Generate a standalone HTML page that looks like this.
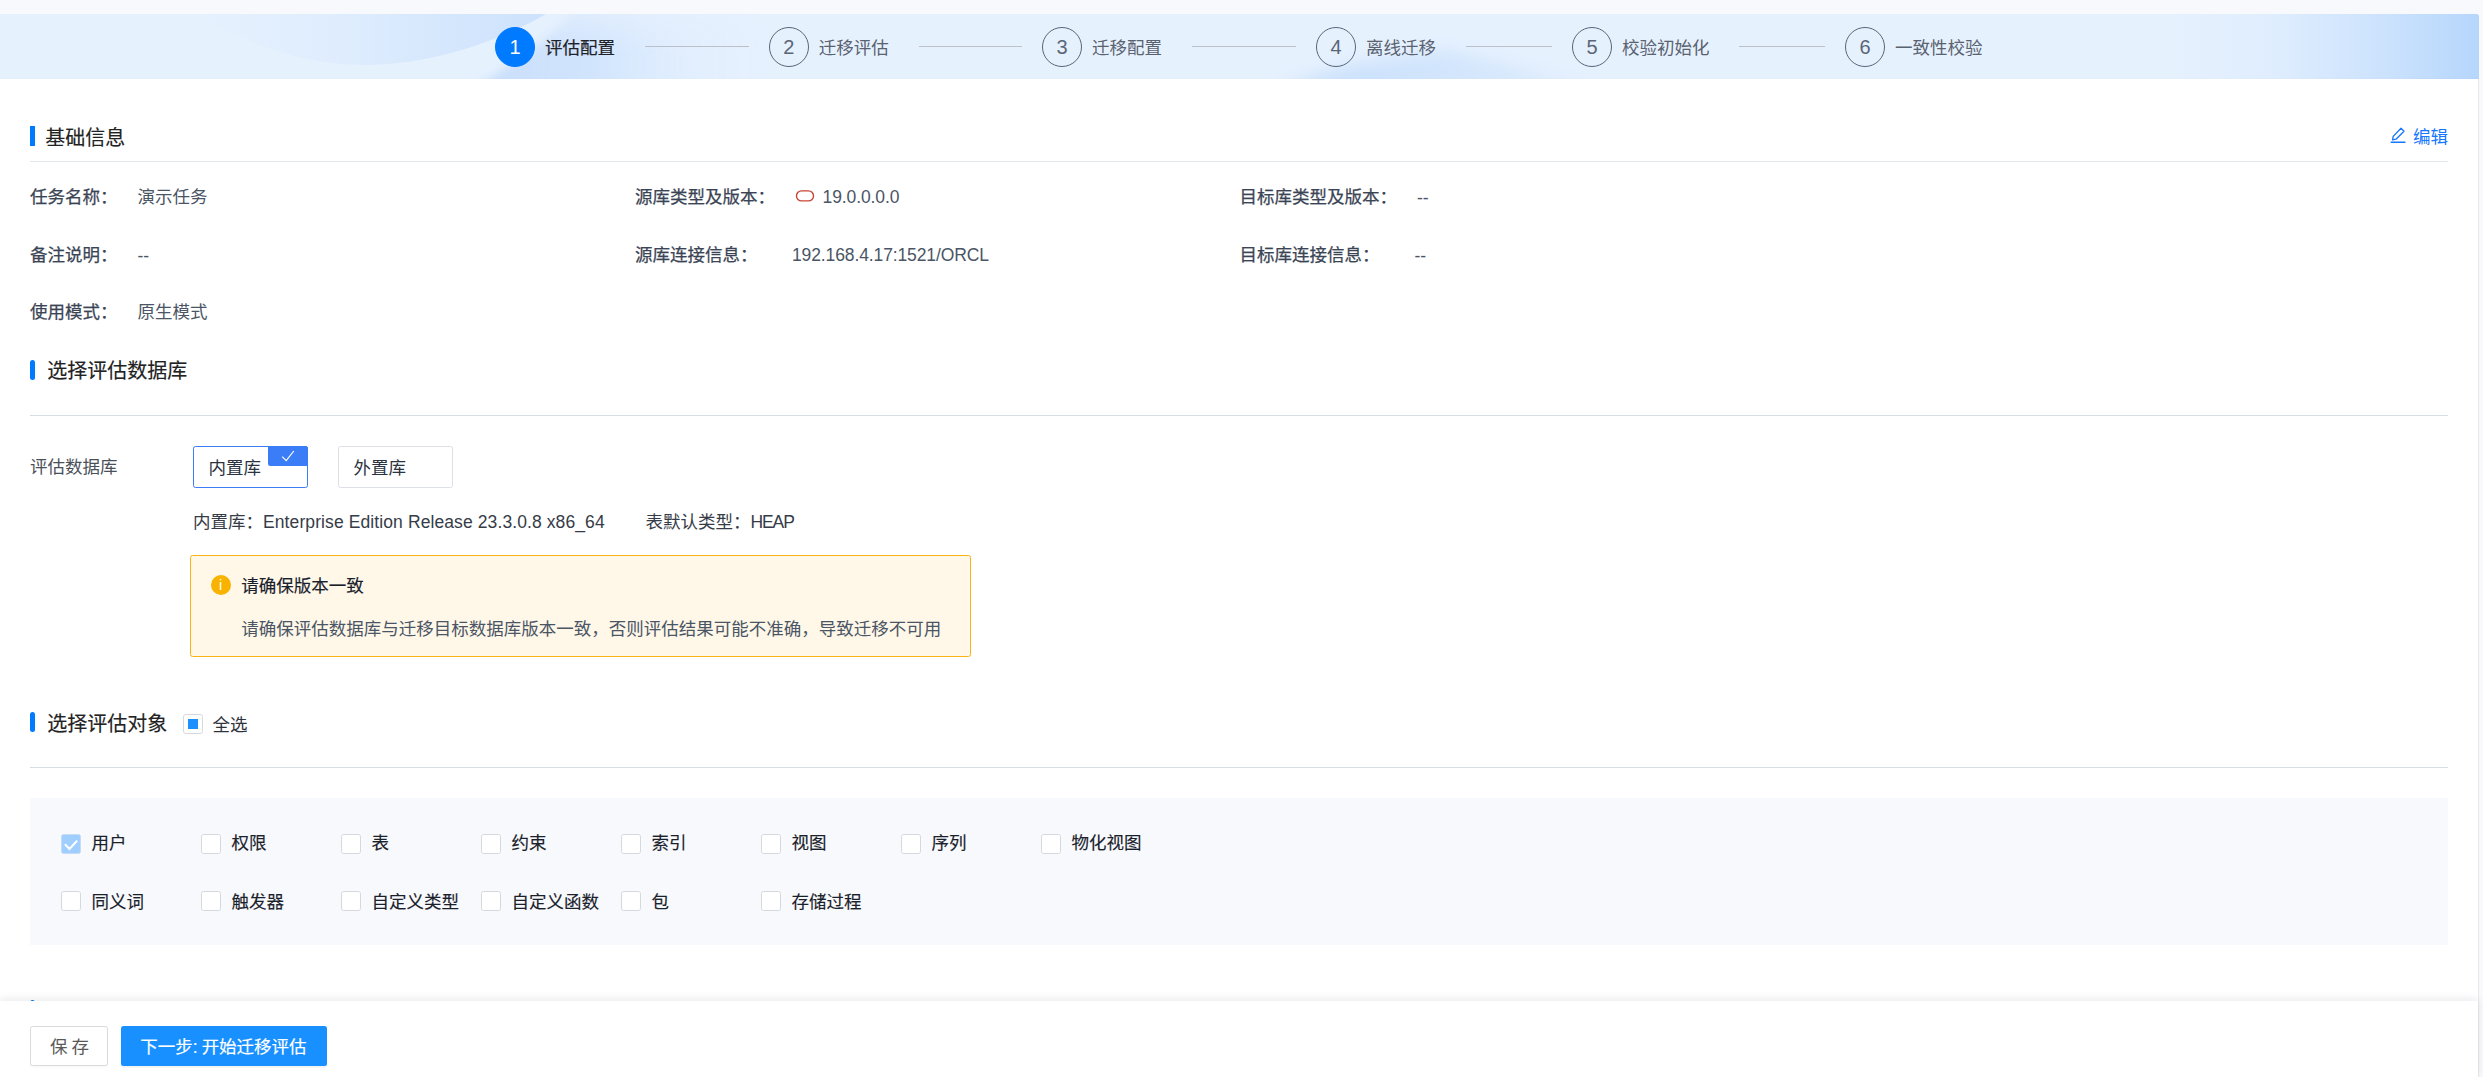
<!DOCTYPE html>
<html lang="zh-CN">
<head>
<meta charset="utf-8">
<title>评估配置</title>
<style>
*{box-sizing:border-box;margin:0;padding:0}
html,body{width:2483px;height:1077px;overflow:hidden}
body{background:#f7f9fc;font-family:"Liberation Sans","Noto Sans CJK SC",sans-serif;font-size:17.5px;color:#1f2329;position:relative}
.abs{position:absolute}
.t{position:absolute;white-space:nowrap;line-height:26px;height:26px;margin-top:1px}
#banner{position:absolute;left:0;top:14px;width:2479px;height:65.3px;background:#e6f1fe;border-top-right-radius:3px;overflow:hidden}
#card{position:absolute;left:0;top:79.3px;width:2478px;height:998px;background:#fff;box-shadow:1px 0 1px rgba(0,0,0,.06)}
.num{position:absolute;top:27px;width:40px;height:40px;border-radius:50%;border:1.25px solid #5a6678;color:#5a6678;font-size:20px;line-height:38.6px;text-align:center}
.num.on{background:#007aff;border-color:#007aff;color:#fff}
.stitle{font-size:17.5px;color:#5a6270;font-weight:400;top:34px}
.stitle.on{color:#1f2329;font-weight:400;-webkit-text-stroke:0.2px #1f2329}
.sline{position:absolute;top:46px;height:1px;background:#bcc0c8}
.h{font-size:20px;font-weight:400;color:#222;-webkit-text-stroke:0.15px #222;margin-top:1.2px;margin-left:-0.7px}
.bar{position:absolute;left:30px;width:5px;height:20px;background:#007aff}
.bar.r{border-radius:2.5px}
.hr{position:absolute;left:30px;width:2418px;height:1px;background:#e3e8f0}
.lb{font-weight:400;color:#3a4454;-webkit-text-stroke:0.25px #3a4454}
.val{color:#4a5565}
.cb{position:absolute;width:20px;height:20px;border:1px solid #d5d8dd;border-radius:2.5px;background:#fff}
.cl{color:#1a212b;-webkit-text-stroke:0.14px #1a212b;margin-top:1.4px}
</style>
</head>
<body>
<div id="banner"><svg width="2479" height="66" viewBox="0 0 2479 66" style="position:absolute;left:0;top:0">
<defs>
<linearGradient id="gA" gradientUnits="userSpaceOnUse" x1="200" y1="0" x2="546" y2="0"><stop offset="0" stop-color="#cde2fc" stop-opacity="0"/><stop offset="0.45" stop-color="#cde2fc" stop-opacity="0.35"/><stop offset="1" stop-color="#cde2fc" stop-opacity="1"/></linearGradient>
<linearGradient id="gB" gradientUnits="userSpaceOnUse" x1="500" y1="0" x2="770" y2="0"><stop offset="0" stop-color="#cadffc" stop-opacity="1"/><stop offset="0.35" stop-color="#cfe3fd" stop-opacity="0.9"/><stop offset="1" stop-color="#e6f1fe" stop-opacity="0"/></linearGradient>
<linearGradient id="gR" gradientUnits="userSpaceOnUse" x1="2170" y1="0" x2="2479" y2="0"><stop offset="0" stop-color="#b6d6fc" stop-opacity="0"/><stop offset="0.35" stop-color="#b6d6fc" stop-opacity="0.16"/><stop offset="0.7" stop-color="#b6d6fc" stop-opacity="0.55"/><stop offset="1" stop-color="#b6d6fc" stop-opacity="1"/></linearGradient>
<linearGradient id="gM" x1="0" y1="0" x2="0" y2="1"><stop offset="0" stop-color="#fff" stop-opacity="0.35"/><stop offset="0.6" stop-color="#fff" stop-opacity="1"/></linearGradient><mask id="mB" maskUnits="userSpaceOnUse" x="400" y="0" width="450" height="66"><rect x="400" y="0" width="450" height="66" fill="url(#gM)"/></mask>
<linearGradient id="gC" gradientUnits="userSpaceOnUse" x1="1290" y1="0" x2="1600" y2="0"><stop offset="0" stop-color="#c4dcfc" stop-opacity="1"/><stop offset="0.4" stop-color="#c9e0fc" stop-opacity="0.8"/><stop offset="1" stop-color="#d4e6fd" stop-opacity="0.5"/></linearGradient>
<filter id="b4" x="-10%" y="-50%" width="120%" height="200%"><feGaussianBlur stdDeviation="4"/></filter>
<filter id="b9" x="-20%" y="-100%" width="140%" height="300%"><feGaussianBlur stdDeviation="9"/></filter>
</defs>
<rect width="2479" height="66" fill="#e6f1fe"/>
<g mask="url(#mB)"><path d="M476 72 C512 52 548 26 578 -8 L800 -8 L800 72 Z" fill="url(#gB)" filter="url(#b4)"/></g>
<path d="M190 0 C250 30 300 51 366 51 C430 51 500 27 546 0 Z" fill="url(#gA)"/>
<path d="M1275 76 L1350 52 L1445 36 L1500 48 L1600 76 Z" fill="url(#gC)" filter="url(#b9)"/>
<rect x="2170" width="309" height="66" fill="url(#gR)"/>
</svg></div>
<div id="card"></div>
<div id="steps">
<div class="num on" style="left:495px">1</div><div class="t stitle on" style="left:545px">评估配置</div><div class="sline" style="left:645px;width:104px"></div>
<div class="num" style="left:768.75px">2</div><div class="t stitle" style="left:818.75px">迁移评估</div><div class="sline" style="left:919px;width:103px"></div>
<div class="num" style="left:1042.1px">3</div><div class="t stitle" style="left:1092.1px">迁移配置</div><div class="sline" style="left:1192px;width:104px"></div>
<div class="num" style="left:1316px">4</div><div class="t stitle" style="left:1366px">离线迁移</div><div class="sline" style="left:1466px;width:86px"></div>
<div class="num" style="left:1572px">5</div><div class="t stitle" style="left:1622px">校验初始化</div><div class="sline" style="left:1739px;width:86px"></div>
<div class="num" style="left:1845px">6</div><div class="t stitle" style="left:1895px">一致性校验</div>
</div>
<div id="content">
<div class="bar" style="top:126px"></div>
<div class="t h" style="left:46px;top:123.4px;">基础信息</div>
<svg class="abs" style="left:2390px;top:126px" width="17" height="18" viewBox="0 0 17 18" fill="none" stroke="#1677ff" stroke-width="1.35" stroke-linejoin="round" stroke-linecap="round"><path d="M11 2.2 L14 5.2 L6 13.2 L2.6 13.8 L3.2 10.4 Z"/><path d="M1.2 16.2 H15"/></svg>
<div class="t lnk" style="left:2413px;top:123.30000000000001px;color:#1677ff">编辑</div>
<div class="hr" style="top:161px"></div>
<div class="t lb" style="left:30px;top:183.4px;">任务名称：</div>
<div class="t val" style="left:137.5px;top:183.4px;">演示任务</div>
<div class="t lb" style="left:30px;top:241px;">备注说明：</div>
<div class="t val" style="left:137.5px;top:241.5px;">--</div>
<div class="t lb" style="left:30px;top:298px;">使用模式：</div>
<div class="t val" style="left:137.5px;top:298px;">原生模式</div>
<div class="t lb" style="left:635px;top:183.4px;">源库类型及版本：</div>
<svg class="abs" style="left:795px;top:190px" width="20" height="12" viewBox="0 0 20 12" fill="none" stroke="#c74634" stroke-width="1.4"><rect x="1.5" y="0.9" width="17" height="10" rx="5"/></svg>
<div class="t val" style="left:822.5px;top:183.4px;"><span style="letter-spacing:-0.1px">19.0.0.0.0</span></div>
<div class="t lb" style="left:635px;top:241px;">源库连接信息：</div>
<div class="t val" style="left:792px;top:241px;"><span style="letter-spacing:-0.12px">192.168.4.17:1521/ORCL</span></div>
<div class="t lb" style="left:1239.4px;top:183.4px;">目标库类型及版本：</div>
<div class="t val" style="left:1417px;top:183.9px;">--</div>
<div class="t lb" style="left:1239.4px;top:241px;">目标库连接信息：</div>
<div class="t val" style="left:1414.5px;top:241.5px;">--</div>
<div class="bar r" style="top:360px"></div>
<div class="t h" style="left:48px;top:357.2px;">选择评估数据库</div>
<div class="hr" style="top:415px;background:#d9dde6"></div>
<div class="t val" style="left:30px;top:453px;color:#4b5058">评估数据库</div>
<div class="abs" style="left:193px;top:446px;width:115px;height:42px;border:1px solid #3b7cf7;border-radius:2.5px;background:#fff"></div>
<div class="abs" style="left:268px;top:446px;width:40px;height:20px;background:#3b7cf7;border-radius:0 2.5px 0 2.5px"></div>
<svg class="abs" style="left:281px;top:449.8px" width="14" height="12" viewBox="0 0 14 12" fill="none" stroke="#fff" stroke-width="1.2"><path d="M1.2 6.6 L5.2 10.6 L12.8 1"/></svg>
<div class="t opt" style="left:208.5px;top:454px;color:#2b3340">内置库</div>
<div class="abs" style="left:338px;top:446px;width:115px;height:42px;border:1px solid #dcdfe6;border-radius:2.5px;background:#fff"></div>
<div class="t opt" style="left:353.5px;top:454px;color:#2b3340">外置库</div>
<div class="t val" style="left:193px;top:508.3px;color:#363c47">内置库：<span class="en" style="letter-spacing:0.1px">Enterprise Edition Release 23.3.0.8 x86_64</span></div>
<div class="t val" style="left:645.5px;top:508.3px;color:#363c47">表默认类型：<span class="en" style="letter-spacing:-1.1px">HEAP</span></div>
<div class="abs" style="left:190px;top:555px;width:781px;height:102px;border:1px solid #f8b414;border-radius:2.5px;background:#fff7e8"></div>
<div class="abs" style="left:210.5px;top:575px;width:20px;height:20px;border-radius:50%;background:#f8b300;color:#fff;font-size:14.5px;line-height:20.5px;text-align:center;font-weight:400">i</div>
<div class="t at" style="left:241.3px;top:572px;color:#17202c;-webkit-text-stroke:0.14px #17202c">请确保版本一致</div>
<div class="t ad" style="left:241.3px;top:614.5px;color:#4a5565">请确保评估数据库与迁移目标数据库版本一致，否则评估结果可能不准确，导致迁移不可用</div>
<div class="bar r" style="top:712px"></div>
<div class="t h" style="left:48px;top:709.4px;">选择评估对象</div>
<div class="cb" style="left:183px;top:714px"><div style="position:absolute;left:3.8px;top:3.8px;width:10.2px;height:10.2px;background:#1e8fff"></div></div>
<div class="t val" style="left:212.6px;top:711px;color:#2f343c">全选</div>
<div class="hr" style="top:767px;background:#d9dde6"></div>
<div class="abs" style="left:30px;top:798px;width:2418px;height:146.5px;background:#f7f9fc"></div>
<div class="cb" style="left:61px;top:834px;background:#a0cfff;border-color:#c6dcf5"><svg style="position:absolute;left:-1px;top:-1px" width="20" height="20" viewBox="0 0 20 20" fill="none" stroke="#fff" stroke-width="2.1"><path d="M3.9 10.3 L8.5 15 L16.2 6.6"/></svg></div>
<div class="t cl" style="left:91.5px;top:829.1px;">用户</div>
<div class="cb" style="left:201px;top:834px"></div>
<div class="t cl" style="left:231.5px;top:829.1px;">权限</div>
<div class="cb" style="left:341px;top:834px"></div>
<div class="t cl" style="left:371.5px;top:829.1px;">表</div>
<div class="cb" style="left:481px;top:834px"></div>
<div class="t cl" style="left:511.5px;top:829.1px;">约束</div>
<div class="cb" style="left:621px;top:834px"></div>
<div class="t cl" style="left:651.5px;top:829.1px;">索引</div>
<div class="cb" style="left:761px;top:834px"></div>
<div class="t cl" style="left:791.5px;top:829.1px;">视图</div>
<div class="cb" style="left:901px;top:834px"></div>
<div class="t cl" style="left:931.5px;top:829.1px;">序列</div>
<div class="cb" style="left:1041px;top:834px"></div>
<div class="t cl" style="left:1071.5px;top:829.1px;">物化视图</div>
<div class="cb" style="left:61px;top:891px"></div>
<div class="t cl" style="left:91.5px;top:887.3px;">同义词</div>
<div class="cb" style="left:201px;top:891px"></div>
<div class="t cl" style="left:231.5px;top:887.3px;">触发器</div>
<div class="cb" style="left:341px;top:891px"></div>
<div class="t cl" style="left:371.5px;top:887.3px;">自定义类型</div>
<div class="cb" style="left:481px;top:891px"></div>
<div class="t cl" style="left:511.5px;top:887.3px;">自定义函数</div>
<div class="cb" style="left:621px;top:891px"></div>
<div class="t cl" style="left:651.5px;top:887.3px;">包</div>
<div class="cb" style="left:761px;top:891px"></div>
<div class="t cl" style="left:791.5px;top:887.3px;">存储过程</div>
<div class="bar r" style="top:999.7px"></div>
</div>
<div id="footer">
<div class="abs" style="left:0;top:1000.5px;width:2478px;height:77px;background:#fff;box-shadow:0 -2px 8px rgba(0,21,41,.085)"></div>
<div class="abs" style="left:30px;top:1026px;width:78px;height:40px;border:1px solid #d9d9d9;border-radius:2.5px;background:#fff;box-shadow:0 2px 0 rgba(0,0,0,.016)"></div>
<div class="t bt" style="left:50px;top:1033px;color:#595959">保<span style="letter-spacing:-0.9px"> </span>存</div>
<div class="abs" style="left:121px;top:1026px;width:206px;height:40px;border-radius:2.5px;background:#1890ff;box-shadow:0 2px 0 rgba(0,0,0,.045)"></div>
<div class="t bt" style="left:140.2px;top:1033px;color:#fff;-webkit-text-stroke:0.18px #fff">下一步<span style="letter-spacing:-0.4px">: </span>开始迁移评估</div>
</div>
</body>
</html>
